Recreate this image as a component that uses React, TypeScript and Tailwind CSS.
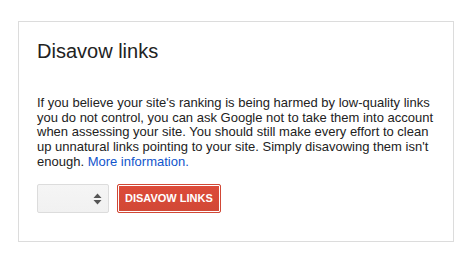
export default function App() {
  return (
    <div className="w-[470px] h-[258px] bg-white pt-[21px] pl-[18px] font-['Liberation_Sans',Arial,sans-serif] text-[#222]">
      <div className="w-[436px] h-[221px] border border-[#dcdcdc] pl-[18px] pr-[16px] pt-[17px]">
        <h2 className="text-[20px] leading-[24px] font-normal">Disavow links</h2>
        <p className="mt-[33px] text-[13px] leading-[14.7px]">
          If you believe your site's ranking is being harmed by low-quality links you do not control, you can ask
          Google not to take them into account when assessing your site. You should still make every effort to
          clean up unnatural links pointing to your site. Simply disavowing them isn't enough.{" "}
          <a href="#" className="text-[#15c]">More information.</a>
        </p>
        <div className="mt-[14px] flex items-center gap-[8px]">
          <div className="relative w-[72px] h-[29px] rounded-[2px] border border-[#dcdcdc] bg-gradient-to-b from-[#f5f5f5] to-[#f1f1f1]">
            <svg className="absolute right-[6px] top-[8px]" width="9" height="12" viewBox="0 0 9 12">
              <path d="M4.5 0.5 L8.5 5 L0.5 5 Z" fill="#555" />
              <path d="M4.5 11.5 L8.5 7 L0.5 7 Z" fill="#555" />
            </svg>
          </div>
          <button
            type="button"
            className="h-[29px] px-[7px] rounded-[2px] border border-[#d14836] bg-gradient-to-b from-[#dd4b39] to-[#d14836] shadow-[inset_0_0_0_1px_#fff] text-white text-[11px] font-bold leading-none tracking-normal"
          >
            DISAVOW LINKS
          </button>
        </div>
      </div>
    </div>
  );
}
